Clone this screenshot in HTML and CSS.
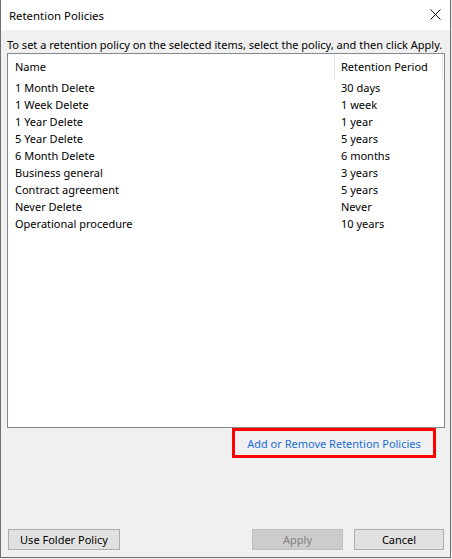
FILE: index.html
```html
<!DOCTYPE html>
<html lang="en">
<head>
  <meta charset="UTF-8" />
  <title>Retention Policies</title>
  <link rel="stylesheet" href="styles.css">
</head>
<body>
  <div class="window">
    <div class="titlebar">
      <span class="title">Retention Policies</span>
      <svg class="close" width="11" height="11" viewBox="0 0 11 11">
        <path d="M0.5 0.5 L10.5 10.5 M10.5 0.5 L0.5 10.5" stroke="#111" stroke-width="1" fill="none" />
      </svg>
    </div>

    <div class="content">
      <p class="intro">To set a retention policy on the selected items, select the policy, and then click Apply.</p>

      <div class="listbox">
        <div class="list-head">
          <div class="col-name">Name</div>
          <div class="col-period">Retention Period</div>
          <div class="col-rest"></div>
        </div>
        <div class="row"><span class="col-name">1 Month Delete</span><span class="col-period">30 days</span></div>
        <div class="row"><span class="col-name">1 Week Delete</span><span class="col-period">1 week</span></div>
        <div class="row"><span class="col-name">1 Year Delete</span><span class="col-period">1 year</span></div>
        <div class="row"><span class="col-name">5 Year Delete</span><span class="col-period">5 years</span></div>
        <div class="row"><span class="col-name">6 Month Delete</span><span class="col-period">6 months</span></div>
        <div class="row"><span class="col-name">Business general</span><span class="col-period">3 years</span></div>
        <div class="row"><span class="col-name">Contract agreement</span><span class="col-period">5 years</span></div>
        <div class="row"><span class="col-name">Never Delete</span><span class="col-period">Never</span></div>
        <div class="row"><span class="col-name">Operational procedure</span><span class="col-period">10 years</span></div>
      </div>

      <div class="link-row">
        <a class="policy-link" href="#">Add or Remove Retention Policies</a>
      </div>

      <div class="buttons">
        <button class="btn btn-folder">Use Folder Policy</button>
        <button class="btn btn-apply" disabled>Apply</button>
        <button class="btn btn-cancel">Cancel</button>
      </div>
    </div>
  </div>
</body>
</html>
```

FILE: styles.css
```css
html, body { margin: 0; padding: 0; background: #f0f0f0; }
body { font-family: "Noto Sans", "Open Sans", sans-serif; font-size: 11px; color: #000; }

.window { width: 449px; height: 557px; border: 1px solid #6f6f6f; border-top: none; background: #f0f0f0; display: flex; flex-direction: column; }

.titlebar { height: 30px; background: #fff; display: flex; align-items: center; justify-content: space-between; padding-left: 8px; }
.title { font-size: 11.4px; }
.close { margin-right: 9px; margin-top: -2px; }

.content { flex: 1; display: flex; flex-direction: column; padding: 0 5px 7px 6px; }
.intro { margin: 7px 0 0 0; line-height: 16px; white-space: nowrap; }

.listbox { height: 373px; border: 1px solid #828790; background: #fff; }
.list-head { display: flex; height: 25px; align-items: center; }
.list-head > div { height: 100%; display: flex; align-items: center; }
.list-head .col-name { border-right: 1px solid #e5e5e5; }
.list-head .col-period { border-right: 1px solid #e5e5e5; }
.col-name { width: 319px; padding-left: 7px; }
.col-period { width: 101px; padding-left: 6px; }
.row { display: flex; height: 17px; line-height: 17px; }
.row .col-name { width: 320px; }

.link-row { display: flex; justify-content: flex-end; padding-right: 9px; }
.policy-link { width: 198px; height: 24px; border: 3px solid #f00; display: flex; align-items: center; justify-content: center; color: #1a6fd6; text-decoration: none; }

.buttons { margin-top: auto; display: flex; padding: 0 1px; }
.btn { font-family: inherit; font-size: 11px; height: 21px; padding: 0; background: #e1e1e1; border: 1px solid #adadad; color: #000; }
.btn-folder { width: 112px; }
.btn-apply { width: 91px; margin-left: auto; background: #cccccc; border-color: #bfbfbf; color: #838383; }
.btn-cancel { width: 90px; margin-left: 11px; }
```
